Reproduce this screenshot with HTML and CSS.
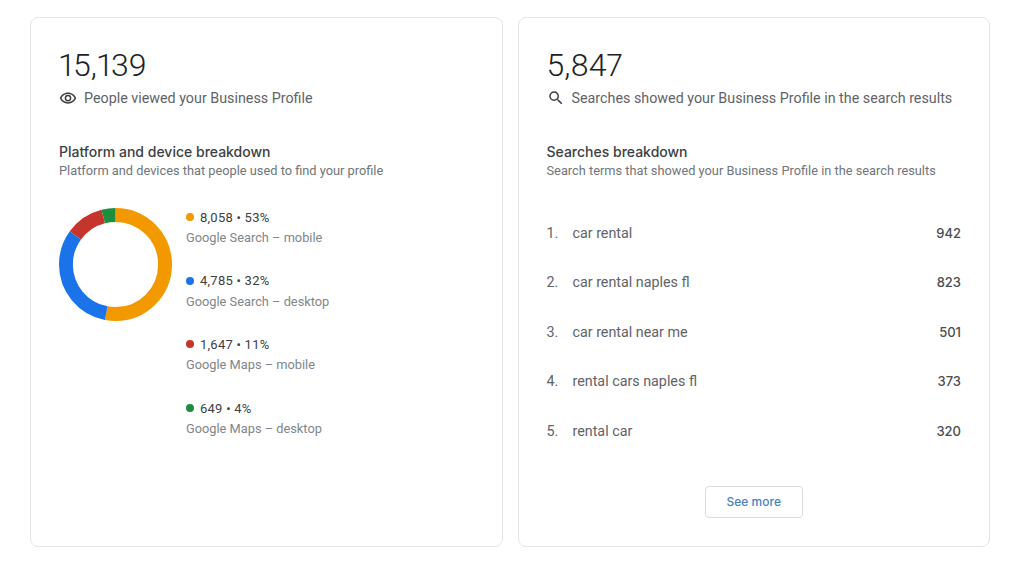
FILE: index.html
```html
<!DOCTYPE html>
<html lang="en">
<head>
    <meta charset="UTF-8">
    <title>Business Profile performance</title>
    <link rel="stylesheet" href="styles.css">
</head>
<body>
    <div class="cards">
        <div class="card">
            <div class="total">15,139</div>
            <div class="caption">
                <svg class="caption-icon" viewBox="0 0 24 24" width="18" height="18"><path fill="#3c4043" d="M12 6.500c3.800 0 7.200 2.100 8.800 5.500-1.600 3.400-5 5.500-8.800 5.500S4.800 15.400 3.200 12C4.800 8.600 8.200 6.500 12 6.500M12 4.500C7 4.500 2.700 7.600 1 12c1.700 4.400 6 7.500 11 7.500s9.300-3.100 11-7.500c-1.700-4.400-6-7.500-11-7.500zM12 9.500a2.500 2.500 0 1 1 0 5 2.500 2.500 0 0 1 0-5M12 7.500a4.500 4.500 0 1 0 0 9 4.500 4.500 0 0 0 0-9z"/></svg>
                <span>People viewed your Business Profile</span>
            </div>
            <h2>Platform and device breakdown</h2>
            <p class="sub">Platform and devices that people used to find your profile</p>
            <div class="breakdown">
                <svg class="donut" viewBox="0 0 114 114" width="113" height="113">
                    <g fill="none" stroke-width="14" transform="rotate(-90 57 57)">
                        <circle cx="57" cy="57" r="50" pathLength="100" stroke="#f29900" stroke-dasharray="53 47"/>
                        <circle cx="57" cy="57" r="50" pathLength="100" stroke="#1a73e8" stroke-dasharray="32 68" stroke-dashoffset="-53"/>
                        <circle cx="57" cy="57" r="50" pathLength="100" stroke="#c5352b" stroke-dasharray="11 89" stroke-dashoffset="-85"/>
                        <circle cx="57" cy="57" r="50" pathLength="100" stroke="#1e8e3e" stroke-dasharray="4 96" stroke-dashoffset="-96"/>
                    </g>
                </svg>
                <ul class="legend">
                    <li>
                        <div class="legend-value"><span class="dot dot-orange"></span>8,058 • 53%</div>
                        <div class="legend-name">Google Search – mobile</div>
                    </li>
                    <li>
                        <div class="legend-value"><span class="dot dot-blue"></span>4,785 • 32%</div>
                        <div class="legend-name">Google Search – desktop</div>
                    </li>
                    <li>
                        <div class="legend-value"><span class="dot dot-red"></span>1,647 • 11%</div>
                        <div class="legend-name">Google Maps – mobile</div>
                    </li>
                    <li>
                        <div class="legend-value"><span class="dot dot-green"></span>649 • 4%</div>
                        <div class="legend-name">Google Maps – desktop</div>
                    </li>
                </ul>
            </div>
        </div>
        <div class="card">
            <div class="total">5,847</div>
            <div class="caption">
                <svg class="caption-icon" viewBox="0 0 24 24" width="18" height="18"><path fill="#3c4043" d="M15.500 14h-.790l-.280-.270A6.470 6.470 0 0 0 16 9.500 6.500 6.500 0 1 0 9.500 16c1.610 0 3.090-.590 4.230-1.570l.270.280v.790l5 4.990L20.490 19l-4.990-5zm-6 0C7.010 14 5 11.990 5 9.500S7.010 5 9.500 5 14 7.010 14 9.500 11.990 14 9.500 14z"/></svg>
                <span>Searches showed your Business Profile in the search results</span>
            </div>
            <h2>Searches breakdown</h2>
            <p class="sub">Search terms that showed your Business Profile in the search results</p>
            <ol class="terms">
                <li><span class="rank">1.</span><span class="term">car rental</span><span class="count">942</span></li>
                <li><span class="rank">2.</span><span class="term">car rental naples fl</span><span class="count">823</span></li>
                <li><span class="rank">3.</span><span class="term">car rental near me</span><span class="count">501</span></li>
                <li><span class="rank">4.</span><span class="term">rental cars naples fl</span><span class="count">373</span></li>
                <li><span class="rank">5.</span><span class="term">rental car</span><span class="count">320</span></li>
            </ol>
            <div class="more">
                <button class="more-btn">See more</button>
            </div>
        </div>
    </div>
</body>
</html>
```

FILE: styles.css
```css
body {
    margin: 0;
    background-color: #fff;
    font-family: Roboto, Arial, sans-serif;
    color: #3c4043;
}
.cards {
    display: flex;
    gap: 15px;
    width: 960px;
    height: 530px;
    padding: 17px 0 26px 30px;
}
.card {
    flex: 1;
    box-sizing: border-box;
    padding: 27px 28px 0 28px;
    border: 1px solid #e3e4e6;
    border-radius: 8px;
}
.total {
    font-size: 32px;
    font-weight: 300;
    line-height: 40px;
    font-variant-numeric: proportional-nums;
    color: #202124;
}
.caption {
    display: flex;
    align-items: center;
    gap: 7px;
    margin-top: 3px;
    height: 20px;
    font-size: 14.300px;
    color: #5f6368;
}
.caption-icon {
    flex: none;
}
h2 {
    margin: 35px 0 0;
    font-family: Inter, Roboto, sans-serif;
    font-size: 14px;
    font-weight: 500;
    line-height: 18px;
    color: #3c4043;
}
.sub {
    margin: 1px 0 0;
    font-size: 12.800px;
    line-height: 18px;
    color: #70757a;
}
.breakdown {
    display: flex;
    gap: 14px;
    margin-top: 20px;
}
.donut {
    flex: none;
    margin-top: 8px;
}
.legend {
    margin: 0;
    padding: 8px 0 0;
    list-style: none;
}
.legend li {
    height: 63.700px;
}
.legend-value {
    display: flex;
    align-items: center;
    height: 18px;
    font-size: 13px;
    letter-spacing: .25px;
    color: #3c4043;
}
.legend-name {
    margin-top: 3px;
    font-size: 12.800px;
    line-height: 18px;
    color: #80868b;
}
.dot {
    width: 8px;
    height: 8px;
    margin-right: 6px;
    border-radius: 50%;
}
.dot-orange { background-color: #f29900; }
.dot-blue { background-color: #1a73e8; }
.dot-red { background-color: #c5352b; }
.dot-green { background-color: #1e8e3e; }
.terms {
    margin: 28px 0 0;
    padding: 0;
    list-style: none;
}
.terms li {
    display: flex;
    align-items: center;
    height: 49.500px;
    font-size: 14.300px;
    color: #5f6368;
}
.rank {
    width: 26px;
}
.term {
    flex: 1;
}
.count {
    font-family: Inter, Roboto, sans-serif;
    font-size: 13px;
    font-weight: 500;
    color: #4a4d51;
}
.more {
    display: flex;
    justify-content: center;
    margin-top: 30px;
}
.more-btn {
    width: 98px;
    height: 32px;
    padding: 0;
    background-color: #fff;
    border: 1px solid #dadce0;
    border-radius: 4px;
    font-family: Inter, Roboto, sans-serif;
    font-size: 12px;
    font-weight: 500;
    color: #4a7fc4;
}
```
